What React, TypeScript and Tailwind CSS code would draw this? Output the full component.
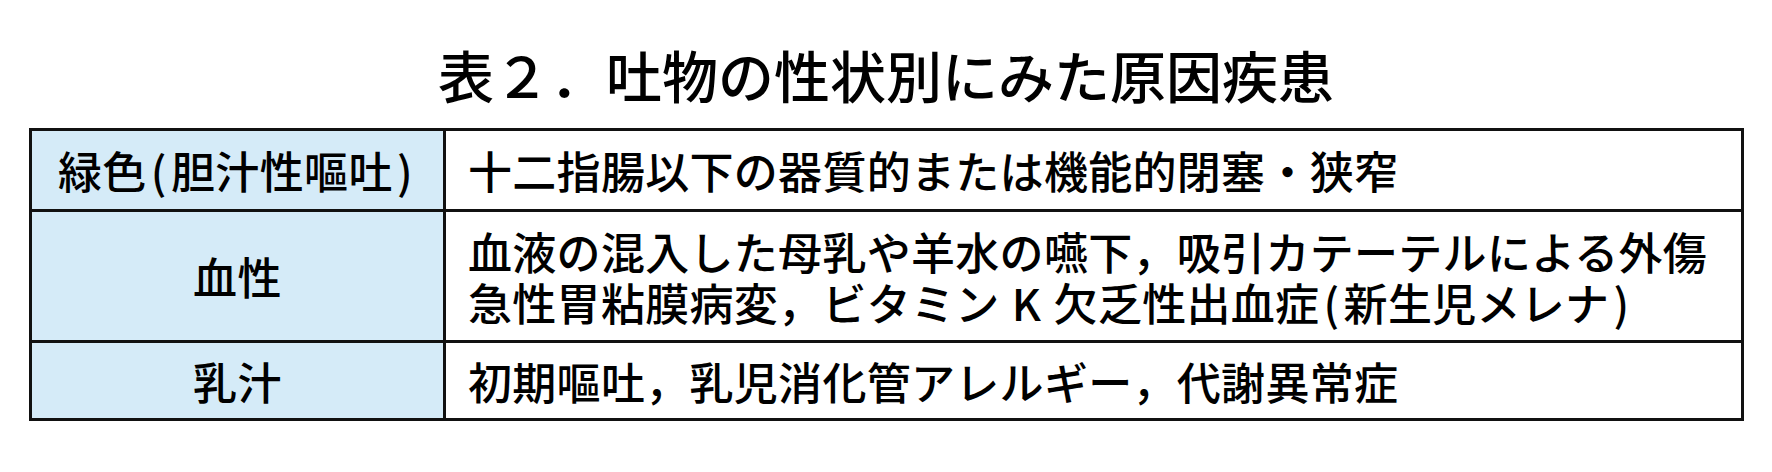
const rows = [
  {
    label: "緑色(胆汁性嘔吐)",
    lines: ["十二指腸以下の器質的または機能的閉塞・狭窄"],
    h: "h-[78px]",
  },
  {
    label: "血性",
    lines: [
      "血液の混入した母乳や羊水の嚥下，吸引カテーテルによる外傷",
      "急性胃粘膜病変，ビタミンKK欠乏性出血症(新生児メレナ)",
    ],
    h: "h-[131px]",
  },
  {
    label: "乳汁",
    lines: ["初期嘔吐，乳児消化管アレルギー，代謝異常症"],
    h: "h-[78px]",
  },
];

// parens are set as half-width cells, the K as a full cell (marked "KK" in the data)
function Cell({ text }: { text: string }) {
  return (
    <>
      {text.split(/([()]|KK)/).map((part, i) => {
        if (part === "(" || part === ")") {
          return (
            <span key={i} className="inline-block w-[0.55em] text-center">
              {part}
            </span>
          );
        }
        if (part === "KK") {
          return (
            <span key={i} className="inline-block w-[54px] text-center">
              K
            </span>
          );
        }
        return <span key={i}>{part}</span>;
      })}
    </>
  );
}

export default function App() {
  return (
    <div
      className="w-[1772px] h-[472px] bg-white text-black"
      style={{ fontFamily: '"Noto Sans CJK JP", "Noto Sans", sans-serif' }}
    >
      {/* Title */}
      <h1 className="pt-[46px] text-center text-[56px] leading-[56px] font-medium">
        表２．吐物の性状別にみた原因疾患
      </h1>

      {/* Table */}
      <div className="mt-[26px] ml-[29px] w-[1715px] border-[3px] border-[#111]">
        {rows.map((row, i) => (
          <div
            key={row.label}
            className={`flex ${row.h} ${i > 0 ? "border-t-[3px] border-[#111]" : ""}`}
          >
            <div className="w-[414px] shrink-0 border-r-[3px] border-[#111] bg-[#d5ebf8] flex items-center justify-center text-[44px] leading-[48px] tracking-[0.4px] font-medium">
              <Cell text={row.label} />
            </div>
            <div className="flex-1 flex flex-col justify-center pl-[22px] text-[44px] leading-[48px] tracking-[0.3px] font-medium">
              {row.lines.map((line, j) => (
                <div key={line} className={j > 0 ? "mt-[3px]" : ""}>
                  <Cell text={line} />
                </div>
              ))}
            </div>
          </div>
        ))}
      </div>
    </div>
  );
}
